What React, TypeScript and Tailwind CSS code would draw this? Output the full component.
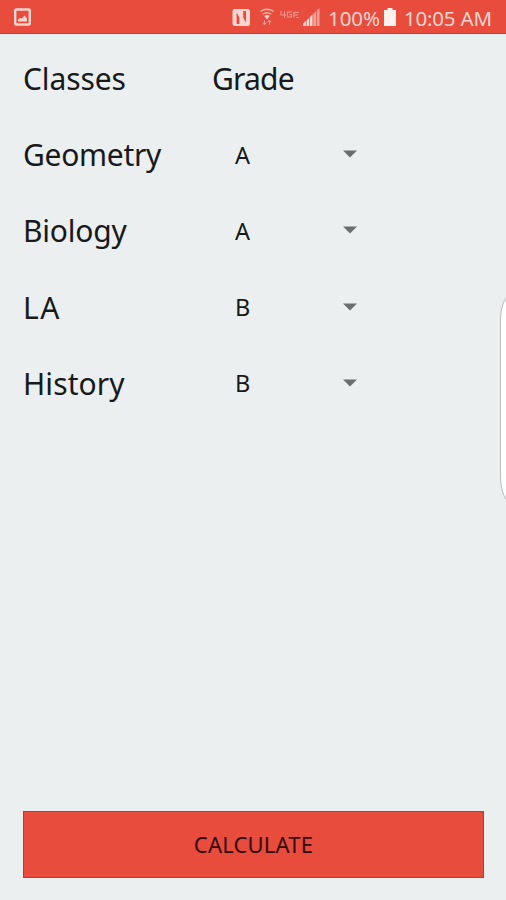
import React, { useState } from "react";

const GRADES = ["A", "B", "C", "D", "F"];

const CLASSES = [
  { name: "Geometry", grade: "A", tracking: "tracking-[-0.3px]" },
  { name: "Biology", grade: "A", tracking: "tracking-[-0.2px]" },
  { name: "LA", grade: "B", tracking: "tracking-[1.6px]" },
  { name: "History", grade: "B", tracking: "tracking-[0.1px]" },
];

function StatusBar() {
  return (
    <header className="flex h-[34px] w-full items-center border-b border-[#dc2e12] bg-[#e74c3c] text-[#fcd5cf]">
      {/* Screenshot notification */}
      <svg className="ml-[14px] mt-px h-[18px] w-[17px]" viewBox="0 0 17 18" fill="none">
        <rect x="1.2" y="1.5" width="14.6" height="15" rx="1" stroke="currentColor" strokeWidth="2.4" />
        <path d="M4 13.5V11.5L6 10l2 .5 2.5-3L13 10.5v3Z" fill="currentColor" />
      </svg>

      {/* NFC, wifi, 4G and signal */}
      <svg className="ml-[200px] h-[34px] w-[92px]" viewBox="231 0 92 34" fill="none">
        <path d="M232.5 11q0-2 2-2h13q2.5 0 2.5 2v13q0 2-2 2h-13q-2.5 0-2.5-2Z" fill="#fcd5cf" />
        <path d="M236.6 12.5V24h2.8v-6.500ZM246 22.5V11h-2.8v6.500Z" fill="#e74c3c" />
        <g stroke="#f7b3a9" strokeWidth="1.4">
          <path d="M260.5 11.5q6.5-4.500 13 0" />
          <path d="M262.7 14.2q4.3-3 8.600 0" />
        </g>
        <path d="M264.3 16q2.7-2 5.4 0l-2.700 3.500Z" fill="#fcd5cf" />
        <path d="M264.5 20v5M262.7 22.5l1.8 2.5 1.8-2.5M269.5 25v-5M267.7 22.5l1.8-2.5 1.8 2.5" stroke="#f29b91" strokeWidth="1" />
        <g stroke="#f39a90" strokeWidth="1.1">
          <path d="M281 11v4h5M284.5 11v7M292 12h-4.500v5h4v-2.500h-2M294 17.5v-5h5M294 15h4M299 17.5h-3" />
        </g>
        <path d="M303 26v-2.500l2.8-2.500v5ZM306.5 26v-5.500l2.5-2.500v8ZM309.7 26v-8.700l2.8-2.800V26Z" fill="#fcd5cf" />
        <path d="M313.2 26V14l2.8-2.800V26ZM316.7 26V10.5l2.8-2.500V26Z" fill="#f4a096" />
      </svg>

      <span className="ml-[5px] mt-[3px] w-[56px] whitespace-nowrap text-[20.5px] leading-none tracking-[-0.1px]">
        100%
      </span>
      <svg className="h-[18px] w-[12px]" viewBox="0 0 12 18">
        <path d="M3.5 0h5v2H12v16H0V2h3.500Z" fill="#fff0ed" />
      </svg>
      <span className="ml-[8px] mt-[3px] whitespace-nowrap text-[20.5px] leading-none tracking-[-0.2px]">
        10:05 AM
      </span>
    </header>
  );
}

type ClassRowProps = {
  name: string;
  initial: string;
  tracking: string;
};

function ClassRow({ name, initial, tracking }: ClassRowProps) {
  const [grade, setGrade] = useState(initial);

  const nextGrade = () => {
    setGrade(GRADES[(GRADES.indexOf(grade) + 1) % GRADES.length]);
  };

  return (
    <div className="flex h-[76.2px] items-center">
      <span className={`w-[212px] text-[30px] leading-none ${tracking}`}>{name}</span>
      <button className="flex w-[122px] items-center justify-between text-[23.5px] leading-none" onClick={nextGrade}>
        <span>{grade}</span>
        <svg className="mb-[2px] h-[8px] w-[14px]" viewBox="0 0 14 8">
          <path d="M0 .5h14L7 7.5Z" fill="#6b6e6e" />
        </svg>
      </button>
    </div>
  );
}

export default function App() {
  return (
    <div className="relative flex h-[900px] w-[506px] flex-col overflow-hidden bg-[#ebeff0] font-['Noto_Sans',sans-serif] text-[#17191a]">
      <StatusBar />

      <main className="flex flex-1 flex-col px-[23px] pb-[22px] pt-[7px]">
        <div className="flex h-[76.2px] items-center text-[30px] leading-none">
          <span className="w-[189px] tracking-[-0.1px]">Classes</span>
          <span className="tracking-[-0.8px]">Grade</span>
        </div>

        {CLASSES.map((item) => (
          <ClassRow key={item.name} name={item.name} initial={item.grade} tracking={item.tracking} />
        ))}

        <button className="mt-auto h-[67px] w-[461px] border border-[#e62b0d] bg-[#e74c3c] pb-px text-[22px] leading-none tracking-[0.2px] text-[#350906]">
          CALCULATE
        </button>
      </main>

      {/* Edge panel handle */}
      <div className="absolute left-[500px] top-[292px] h-[213px] w-[30px] rounded-[14px/28px] border border-[#b9bcbc] bg-white" />
    </div>
  );
}
